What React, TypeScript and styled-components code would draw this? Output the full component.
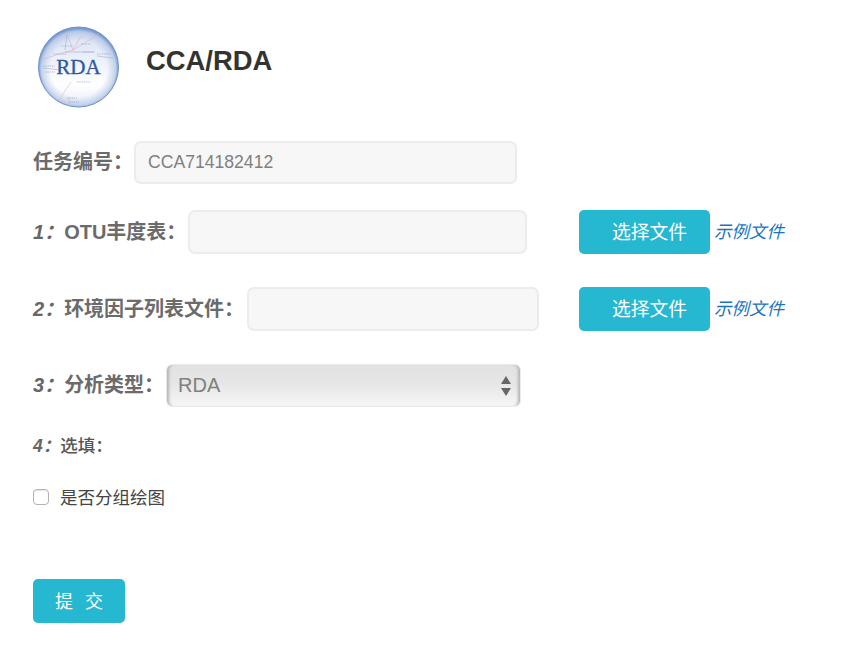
import React from "react";
import styled, { createGlobalStyle } from "styled-components";

const Global = createGlobalStyle`
  html, body { margin: 0; padding: 0; background: #fff; }
  body { font-family: "Liberation Sans", "Noto Sans CJK SC", sans-serif; color: #333; }
`;
const Page = styled.main`
  width: 861px;
  height: 648px;
  box-sizing: border-box;
  padding: 26px 0 0 33px;
  overflow: hidden;
`;
const Header = styled.header`
  display: flex;
  align-items: flex-start;
  gap: 25px;
  margin: 0 0 31px 0;
  padding-left: 4px;
`;
const Title = styled.h1`
  margin: 17px 0 0;
  font-size: 27.4px;
  line-height: 36px;
  font-weight: 700;
  color: #333;
`;
const Row = styled.div<{ $h: number; $mb: number }>`
  display: flex;
  align-items: center;
  height: ${(p) => p.$h}px;
  margin-bottom: ${(p) => p.$mb}px;
`;
const Label = styled.label<{ $w: number }>`
  width: ${(p) => p.$w}px;
  flex: none;
  padding-bottom: 4px;
  font-size: 20px;
  font-weight: 700;
  color: #6b6b6b;
  white-space: nowrap;
`;
const Num = styled.i`
  font-weight: 700;
  color: #666;
`;
const TextField = styled.input<{ $w: number }>`
  width: ${(p) => p.$w}px;
  height: 100%;
  flex: none;
  box-sizing: border-box;
  padding: 0 12px;
  border: 2px solid #ececec;
  border-radius: 7px;
  background: #f7f7f7;
  font: 17.6px "Liberation Sans", sans-serif;
  color: #808080;
  outline: none;
`;
const FileGroup = styled.div<{ $ml: number }>`
  display: flex;
  align-items: center;
  height: 100%;
  margin-left: ${(p) => p.$ml}px;
  gap: 4px;
`;
const FileButton = styled.button`
  width: 131px;
  height: 100%;
  box-sizing: border-box;
  padding: 0 0 3px 10px;
  border: 0;
  border-radius: 5px;
  background: #26b8d1;
  color: #fff;
  font: 18.75px "Liberation Sans", "Noto Sans CJK SC", sans-serif;
`;
const ExampleLink = styled.a`
  padding-bottom: 4px;
  font-size: 17.5px;
  font-style: italic;
  color: #1b74bd;
  text-decoration: none;
  white-space: nowrap;
`;
const SelectBox = styled.div`
  position: relative;
  display: flex;
  align-items: center;
  width: 355px;
  height: 100%;
  box-sizing: border-box;
  padding-left: 11px;
  border: 1px solid #ebebeb;
  border-radius: 6px;
  background: linear-gradient(#e2e2e2 0%, #e6e6e6 45%, #f6f6f6 100%);
  box-shadow: inset 4px 0 3px -2px #b4b4b4, inset -4px 0 3px -2px #b4b4b4;
  color: #808080;
  font-size: 20px;
`;
const Arrows = styled.svg`
  position: absolute;
  right: 8px;
  top: 11px;
`;
const OptionalLabel = styled.div`
  padding-bottom: 4px;
  font-size: 17.5px;
  color: #555;
  font-weight: 500;
`;
const CheckRow = styled.label`
  display: flex;
  align-items: center;
  gap: 11px;
  font-size: 17.5px;
  color: #444;
  margin-bottom: 74px;
  height: 17px;
`;
const CheckBox = styled.span`
  width: 16px;
  height: 16px;
  box-sizing: border-box;
  border: 1px solid #b4b4b4;
  border-radius: 4px;
  background: #fff;
  box-shadow: inset 0 1px 1px #e4e4e4;
`;
const Submit = styled.button`
  display: block;
  width: 92px;
  height: 44px;
  padding: 0 0 3px;
  border: 0;
  border-radius: 5px;
  background: #26b8d1;
  color: #fff;
  font: 18px "Liberation Sans", "Noto Sans CJK SC", sans-serif;
  word-spacing: 7px;
`;

const Logo = () => (
  <svg width="84" height="84" viewBox="0 0 84 84" style={{ flex: "none" }}>
    <defs>
      <linearGradient id="base" x1="0" y1="0" x2="0" y2="1">
        <stop offset="0%" stopColor="#d5e0f2" />
        <stop offset="45%" stopColor="#eef2fa" />
        <stop offset="72%" stopColor="#ffffff" />
        <stop offset="100%" stopColor="#e6ecf7" />
      </linearGradient>
      <radialGradient id="rim" cx="50%" cy="52%" r="50%">
        <stop offset="70%" stopColor="#a9bfe4" stopOpacity="0" />
        <stop offset="92%" stopColor="#9db5de" stopOpacity="0.55" />
        <stop offset="100%" stopColor="#6f92cd" stopOpacity="0.9" />
      </radialGradient>
      <radialGradient id="halo" cx="50%" cy="50%" r="50%">
        <stop offset="90%" stopColor="#c8d6ee" stopOpacity="0.6" />
        <stop offset="100%" stopColor="#ffffff" stopOpacity="0" />
      </radialGradient>
    </defs>
    <circle cx="41.5" cy="41" r="42" fill="url(#halo)" />
    <circle cx="41.5" cy="41" r="40" fill="url(#base)" />
    <circle cx="41.5" cy="41" r="40" fill="url(#rim)" stroke="#6d94cb" strokeWidth="1" />
    <g fill="none" strokeWidth="0.6">
      <path d="M30 8 L36 24 L62 8 M36 24 L44 10 M4 34 L22 28 L36 24" stroke="#e7a9bd" />
      <path d="M30 8 L28 24 M28 26 L58 26 M60 30 L76 32 M6 42 L24 44" stroke="#9fb0cf" />
      <path d="M34 56 L22 74 M32 72 L32 80" stroke="#e3b7c4" />
      <path d="M24 20h12M16 28h14M44 18h10M46 26h10M60 28h14M6 40h12M8 46h10M40 56h14M32 76h10M30 72h10" stroke="#8f9db8" strokeDasharray="1.5 0.8" />
    </g>
    <text x="41.5" y="48" textAnchor="middle" fontFamily="'Liberation Serif', serif" fontSize="21" stroke="#2b58a0" strokeWidth="0.3" fill="#2b58a0">RDA</text>
  </svg>
);

const Files = ({ ml }: { ml: number }) => (
  <FileGroup $ml={ml}>
    <FileButton type="button">选择文件</FileButton>
    <ExampleLink href="#">示例文件</ExampleLink>
  </FileGroup>
);

export default function App() {
  return (
    <Page>
      <Global />
      <Header>
        <Logo />
        <Title>CCA/RDA</Title>
      </Header>
      <Row $h={43} $mb={26}>
        <Label $w={101}>任务编号：</Label>
        <TextField $w={383} readOnly value="CCA714182412" />
      </Row>
      <Row $h={44} $mb={33}>
        <Label $w={155}><Num>1：</Num>OTU丰度表：</Label>
        <TextField $w={339} readOnly value="" />
        <Files ml={52} />
      </Row>
      <Row $h={44} $mb={33}>
        <Label $w={214}><Num>2：</Num>环境因子列表文件：</Label>
        <TextField $w={292} readOnly value="" />
        <Files ml={40} />
      </Row>
      <Row $h={43} $mb={28}>
        <Label $w={133}><Num>3：</Num>分析类型：</Label>
        <SelectBox>
          RDA
          <Arrows width="12" height="22" viewBox="0 0 12 22">
            <path d="M6 0 L11 8 H1 Z M1 12 H11 L6 20 Z" fill="#666" />
          </Arrows>
        </SelectBox>
      </Row>
      <Row $h={22} $mb={31}>
        <OptionalLabel><Num>4：</Num>选填：</OptionalLabel>
      </Row>
      <CheckRow>
        <CheckBox />
        是否分组绘图
      </CheckRow>
      <Submit type="button">提 交</Submit>
    </Page>
  );
}
